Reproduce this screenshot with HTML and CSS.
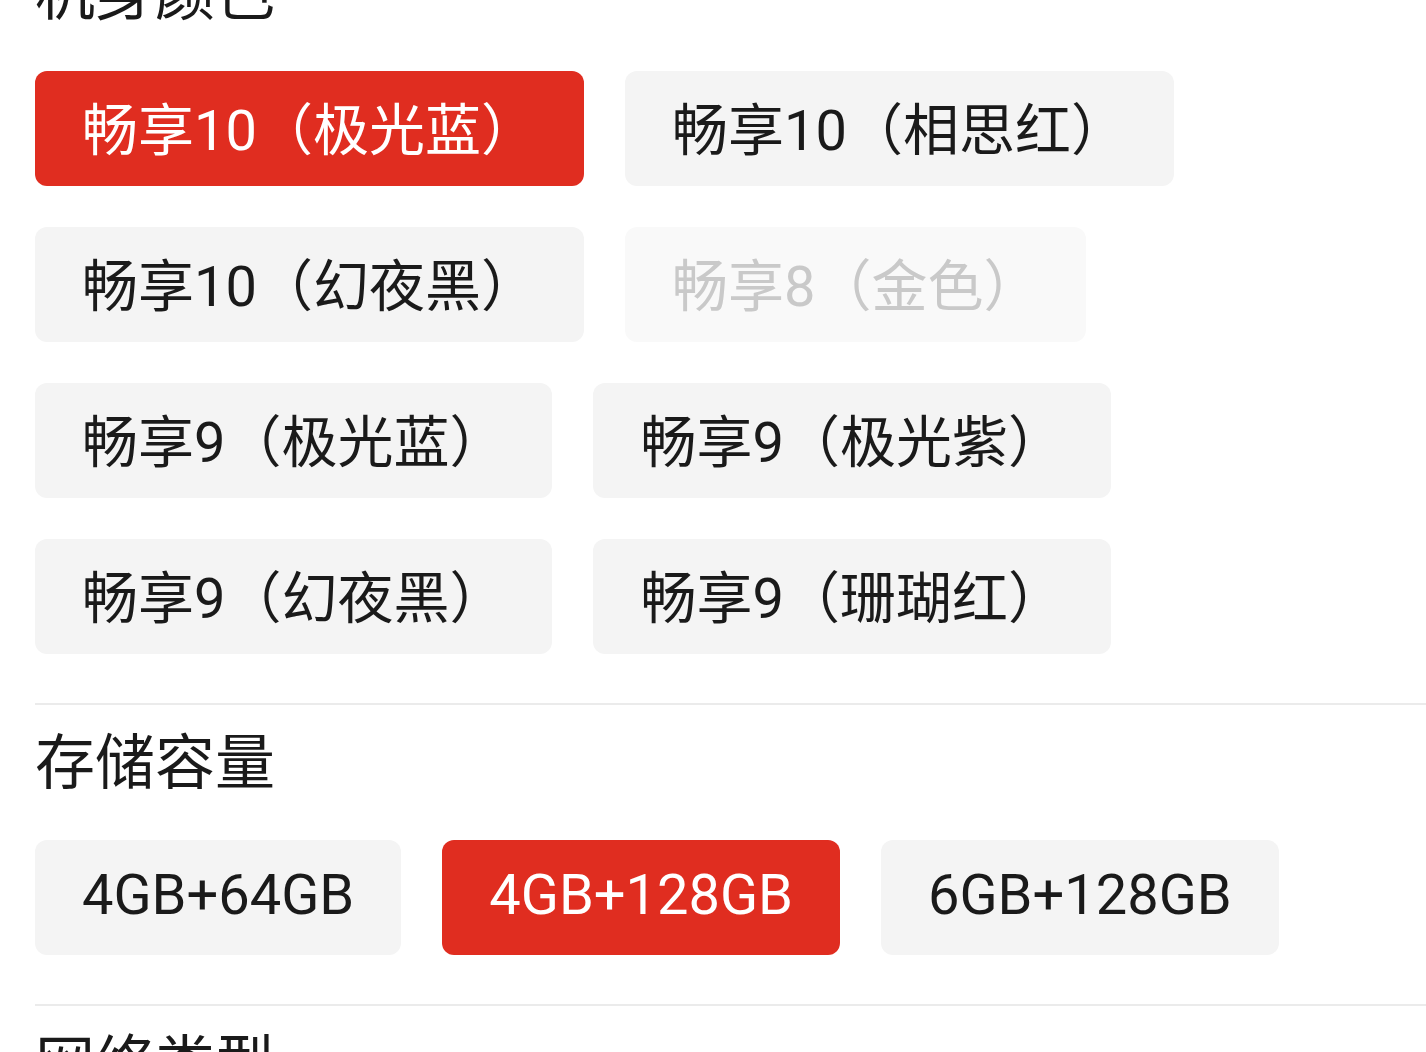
FILE: index.html
```html
<!DOCTYPE html>
<html lang="zh-CN">
<head>
    <meta charset="UTF-8">
    <meta name="viewport" content="width=device-width, initial-scale=1.0">
    <title>选择规格</title>
    <link rel="stylesheet" href="styles.css">
</head>
<body>

    <div class="spec-panel">
        <div class="spec-group">
            <h2 class="spec-title">机身颜色</h2>
            <div class="option-list">
                <button class="option selected">畅享10（极光蓝）</button>
                <button class="option">畅享10（相思红）</button>
                <button class="option">畅享10（幻夜黑）</button>
                <button class="option disabled">畅享8（金色）</button>
                <button class="option">畅享9（极光蓝）</button>
                <button class="option">畅享9（极光紫）</button>
                <button class="option">畅享9（幻夜黑）</button>
                <button class="option">畅享9（珊瑚红）</button>
            </div>
        </div>

        <div class="spec-group">
            <h2 class="spec-title">存储容量</h2>
            <div class="option-list">
                <button class="option">4GB+64GB</button>
                <button class="option selected">4GB+128GB</button>
                <button class="option">6GB+128GB</button>
            </div>
        </div>

        <div class="spec-group">
            <h2 class="spec-title">网络类型</h2>
        </div>
    </div>

</body>
</html>
```

FILE: styles.css
```css
body {
    margin: 0;
    background-color: #ffffff;
    font-family: Roboto, "Noto Sans CJK SC", sans-serif;
    color: #1a1a1a;
    overflow: hidden;
}

.spec-panel {
    margin-top: -35px;
    padding-left: 35px;
}

.spec-group {
    border-bottom: 2px solid #ebebeb;
    padding: 29px 0 49px;
}

.spec-group:first-child {
    padding-top: 0;
}

.spec-title {
    margin: 0 0 46px;
    font-size: 60px;
    line-height: 60px;
    font-weight: 400;
    color: #1a1a1a;
}

.option-list {
    display: flex;
    flex-wrap: wrap;
    gap: 41px;
    padding-right: 100px;
}

.option {
    height: 115px;
    padding: 0 47px 6px;
    border: none;
    border-radius: 12px;
    background-color: #f4f4f4;
    color: #1a1a1a;
    font-family: Roboto, "Noto Sans CJK SC", sans-serif;
    font-size: 56px;
    white-space: nowrap;
    cursor: pointer;
}

.option.selected {
    background-color: #e02d20;
    color: #ffffff;
}

.option.disabled {
    background-color: #f9f9f9;
    color: #c9c9c9;
}
```
